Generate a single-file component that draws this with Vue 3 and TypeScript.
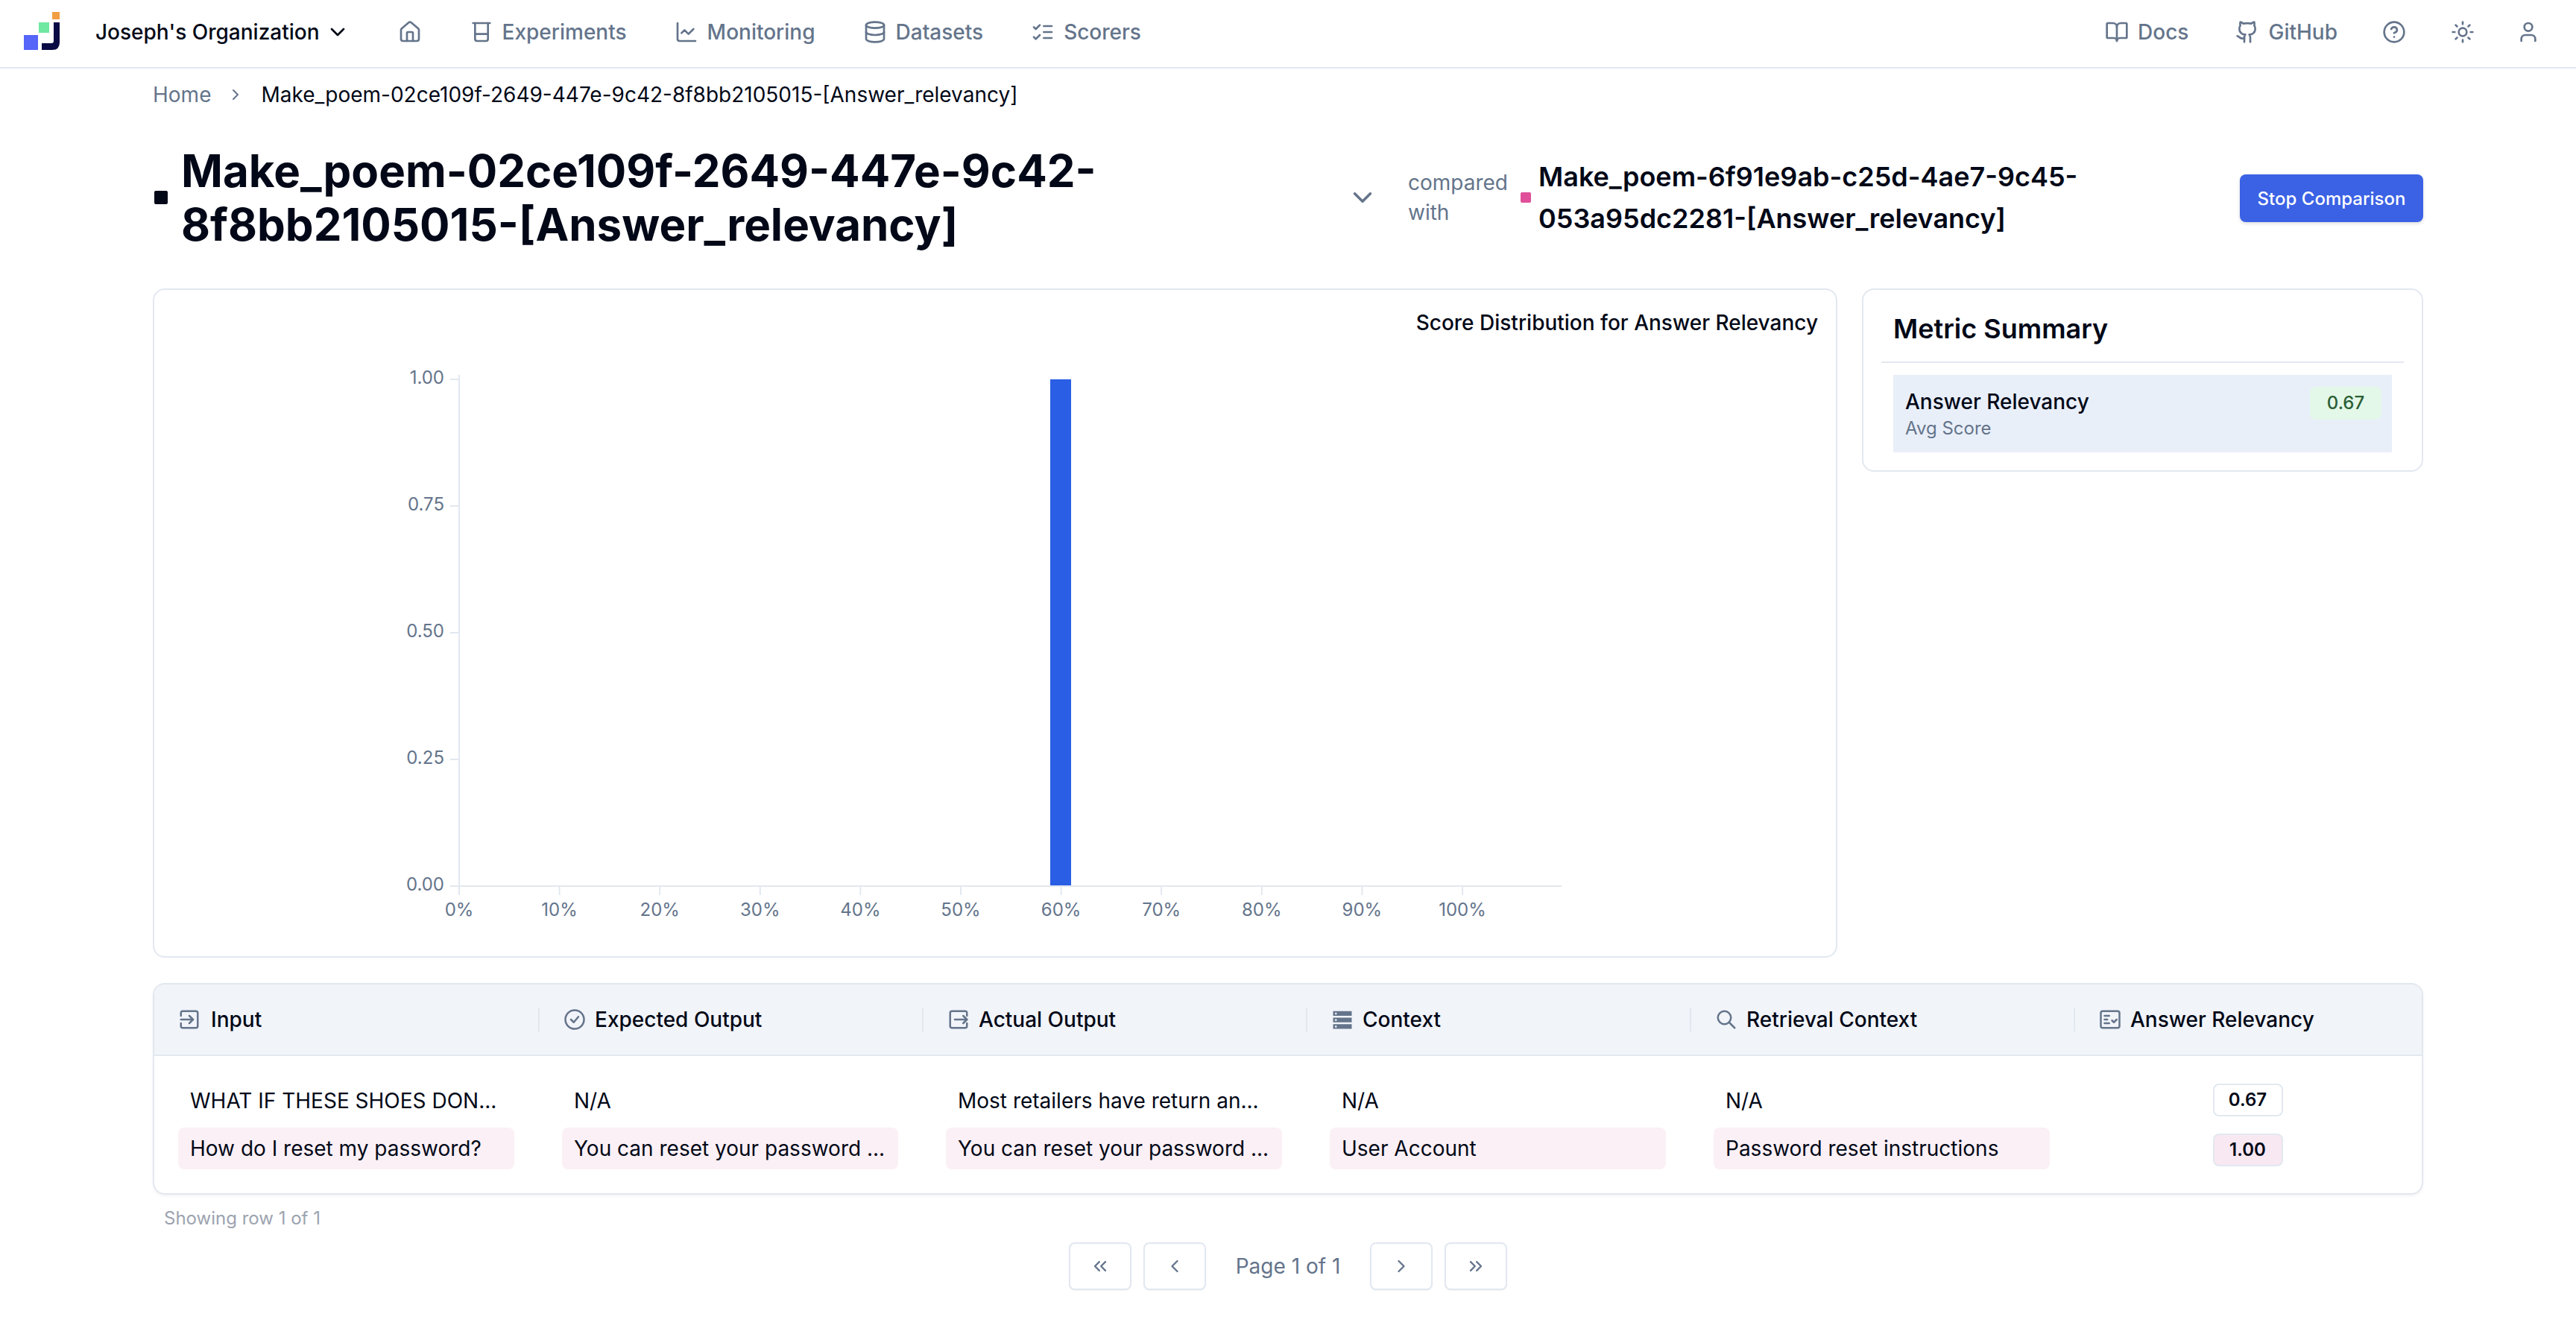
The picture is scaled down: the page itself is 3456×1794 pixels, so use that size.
<template>
  <div class="page">
    <header class="topbar">
      <div class="brand">
        <svg class="logo" width="52" height="54" viewBox="0 0 52 54">
          <rect x="0" y="31" width="19" height="20" fill="#5566f8" />
          <rect x="20" y="14" width="14" height="14" fill="#6fe8a2" />
          <rect x="38" y="0" width="10" height="10" fill="#f29e44" />
          <path d="M40 14h8v27q0 10-10 10H24v-9h13q3 0 3-3z" fill="#0a0a45" />
        </svg>
        <span class="org">Joseph's Organization</span>
        <svg class="org-chevron" width="32" height="32" viewBox="0 0 24 24"><path d="m6 9 6 6 6-6" /></svg>
      </div>
      <nav class="nav-left">
        <a class="nav-item home">
          <svg class="ico" viewBox="0 0 24 24"><path d="M15 21v-8a1 1 0 0 0-1-1h-4a1 1 0 0 0-1 1v8" /><path d="M3 10a2 2 0 0 1 .709-1.528l7-5.999a2 2 0 0 1 2.582 0l7 5.999A2 2 0 0 1 21 10v9a2 2 0 0 1-2 2H5a2 2 0 0 1-2-2z" /></svg>
        </a>
        <a v-for="item in navItems" :key="item.label" class="nav-item">
          <svg class="ico" viewBox="0 0 24 24" v-html="item.icon"></svg>
          <span>{{ item.label }}</span>
        </a>
      </nav>
      <nav class="nav-right">
        <a class="nav-item docs">
          <svg class="ico" viewBox="0 0 24 24"><path d="M12 7v14" /><path d="M3 18a1 1 0 0 1-1-1V4a1 1 0 0 1 1-1h5a4 4 0 0 1 4 4 4 4 0 0 1 4-4h5a1 1 0 0 1 1 1v13a1 1 0 0 1-1 1h-6a3 3 0 0 0-3 3 3 3 0 0 0-3-3z" /></svg>
          <span>Docs</span>
        </a>
        <a class="nav-item">
          <svg class="ico" viewBox="0 0 24 24"><path d="M15 22v-4a4.8 4.8 0 0 0-1-3.5c3 0 6-2 6-5.5.08-1.25-.27-2.48-1-3.5.28-1.15.28-2.35 0-3.5 0 0-1 0-3 1.5-2.64-.5-5.36-.5-8 0C6 2 5 2 5 2c-.3 1.15-.3 2.35 0 3.5A5.403 5.403 0 0 0 4 9c0 3.5 3 5.5 6 5.5-.39.49-.68 1.05-.85 1.65-.17.6-.22 1.23-.15 1.85v4" /><path d="M9 18c-4.51 2-5-2-7-2" /></svg>
          <span>GitHub</span>
        </a>
        <a class="nav-item">
          <svg class="ico" viewBox="0 0 24 24"><circle cx="12" cy="12" r="10" /><path d="M9.09 9a3 3 0 0 1 5.83 1c0 2-3 3-3 3" /><path d="M12 17h.01" /></svg>
        </a>
        <a class="nav-item">
          <svg class="ico" viewBox="0 0 24 24"><circle cx="12" cy="12" r="4" /><path d="M12 2v2M12 20v2M4.93 4.93l1.41 1.41M17.66 17.66l1.41 1.41M2 12h2M20 12h2M6.34 17.66l-1.41 1.41M19.07 4.93l-1.41 1.41" /></svg>
        </a>
        <a class="nav-item user">
          <svg class="ico" viewBox="0 0 24 24"><path d="M19 21v-2a4 4 0 0 0-4-4H9a4 4 0 0 0-4 4v2" /><circle cx="12" cy="7" r="4" /></svg>
        </a>
      </nav>
    </header>

    <main class="content">
      <div class="crumbs">
        <span class="crumb-home">Home</span>
        <svg class="crumb-sep" width="24" height="24" viewBox="0 0 24 24"><path d="m9 18 6-6-6-6" /></svg>
        <span class="crumb-current">{{ runA }}</span>
      </div>

      <div class="title-row">
        <div class="title-main">
          <i class="dot dot-black"></i>
          <h1>{{ runA }}</h1>
        </div>
        <svg class="title-chevron" width="42" height="42" viewBox="0 0 24 24"><path d="m6 9 6 6 6-6" /></svg>
        <div class="compared">compared with</div>
        <i class="dot dot-pink"></i>
        <h2 class="title-other">{{ runB }}</h2>
        <button class="stop-btn">Stop Comparison</button>
      </div>

      <div class="cards">
        <section class="card chart-card">
          <div class="chart-title">Score Distribution for Answer Relevancy</div>
          <svg class="chart" width="2000" height="760" viewBox="0 0 2000 760">
            <g class="axis">
              <line x1="409" y1="0" x2="409" y2="688" />
              <line x1="397" y1="686" x2="1888" y2="686" />
              <line v-for="t in yTicks" :key="t.label" x1="397" :y1="t.y" x2="409" :y2="t.y" />
              <line v-for="t in xTicks" :key="t.label" :x1="t.x" y1="686" :x2="t.x" y2="698" />
            </g>
            <rect class="bar" x="1202" y="6" width="28" height="679" />
            <text v-for="t in yTicks" :key="t.label" class="tick" x="389" :y="t.y + 6" text-anchor="end">{{ t.label }}</text>
            <text v-for="t in xTicks" :key="t.label" class="tick" :x="t.x" y="726" text-anchor="middle">{{ t.label }}</text>
          </svg>
        </section>

        <aside class="card summary-card">
          <h3>Metric Summary</h3>
          <div class="summary-row">
            <div>
              <div class="summary-name">Answer Relevancy</div>
              <div class="summary-sub">Avg Score</div>
            </div>
            <span class="summary-badge">0.67</span>
          </div>
        </aside>
      </div>

      <section class="table">
        <div class="grid thead">
          <div v-for="col in columns" :key="col.label" class="th">
            <svg class="ico th-ico" viewBox="0 0 24 24" v-html="col.icon"></svg>
            <span>{{ col.label }}</span>
          </div>
        </div>
        <div class="grid tbody">
          <div v-for="(text, i) in rowA" :key="'a' + i" class="cell">{{ text }}</div>
          <div class="score-cell"><span class="score">0.67</span></div>
          <div v-for="(text, i) in rowB" :key="'b' + i" class="cell cell-b">{{ text }}</div>
          <div class="score-cell"><span class="score score-b">1.00</span></div>
        </div>
      </section>

      <div class="showing">Showing row 1 of 1</div>

      <div class="pager">
        <button class="page-btn"><svg width="28" height="28" viewBox="0 0 24 24"><path d="m11 17-5-5 5-5M18 17l-5-5 5-5" /></svg></button>
        <button class="page-btn"><svg width="28" height="28" viewBox="0 0 24 24"><path d="m15 18-6-6 6-6" /></svg></button>
        <span class="page-label">Page 1 of 1</span>
        <button class="page-btn"><svg width="28" height="28" viewBox="0 0 24 24"><path d="m9 18 6-6-6-6" /></svg></button>
        <button class="page-btn"><svg width="28" height="28" viewBox="0 0 24 24"><path d="m6 17 5-5-5-5M13 17l5-5-5-5" /></svg></button>
      </div>
    </main>
  </div>
</template>

<script setup lang="ts">
const runA = 'Make_poem-02ce109f-2649-447e-9c42-8f8bb2105015-[Answer_relevancy]'
const runB = 'Make_poem-6f91e9ab-c25d-4ae7-9c45-053a95dc2281-[Answer_relevancy]'

const navItems = [
  {
    label: 'Experiments',
    icon: '<path d="M3.5 3h17" /><path d="M5.5 3v16a2 2 0 0 0 2 2h9a2 2 0 0 0 2-2V3" /><path d="M5.5 14h13" />'
  },
  {
    label: 'Monitoring',
    icon: '<path d="M3 3v16a2 2 0 0 0 2 2h16" /><path d="m19 9-5 5-4-4-3 3" />'
  },
  {
    label: 'Datasets',
    icon: '<ellipse cx="12" cy="5" rx="9" ry="3" /><path d="M3 5v14a9 3 0 0 0 18 0V5" /><path d="M3 12a9 3 0 0 0 18 0" />'
  },
  {
    label: 'Scorers',
    icon: '<path d="m3 17 2 2 4-4" /><path d="m3 7 2 2 4-4" /><path d="M13 6h8M13 12h8M13 18h8" />'
  }
]

const yTicks = [
  { label: '1.00', y: 6 },
  { label: '0.75', y: 176 },
  { label: '0.50', y: 346 },
  { label: '0.25', y: 516 },
  { label: '0.00', y: 686 }
]

const xTicks = Array.from({ length: 11 }, (_, i) => ({
  label: `${i * 10}%`,
  x: 409 + i * 134.6
}))

const columns = [
  { label: 'Input', icon: '<path d="M3 8V5a2 2 0 0 1 2-2h14a2 2 0 0 1 2 2v14a2 2 0 0 1-2 2H5a2 2 0 0 1-2-2v-3" /><path d="m12 16 4-4-4-4" /><path d="M3 12h13" />' },
  { label: 'Expected Output', icon: '<circle cx="12" cy="12" r="10" /><path d="m8 12 3 3 5-6" />' },
  { label: 'Actual Output', icon: '<path d="M21 8V5a2 2 0 0 0-2-2H5a2 2 0 0 0-2 2v14a2 2 0 0 0 2 2h14a2 2 0 0 0 2-2v-3" /><path d="M8 12h13" /><path d="m17 8 4 4-4 4" />' },
  { label: 'Context', icon: '<rect x="2" y="3" width="20" height="5" fill="#64748b" stroke="none" /><rect x="2" y="10" width="20" height="5" fill="#64748b" stroke="none" /><rect x="2" y="17" width="20" height="5" fill="#64748b" stroke="none" /><path d="M5 5.5h.01M5 12.5h.01M5 19.5h.01" stroke="#fff" />' },
  { label: 'Retrieval Context', icon: '<circle cx="10" cy="10" r="7" /><path d="m21 21-6-6" />' },
  { label: 'Answer Relevancy', icon: '<rect x="2" y="3" width="20" height="18" rx="2" /><path d="M6 8h5M6 12h3M6 16h5" /><path d="m14 13 2 2 3-3" />' }
]

const rowA = ['WHAT IF THESE SHOES DON...', 'N/A', 'Most retailers have return an...', 'N/A', 'N/A']
const rowB = [
  'How do I reset my password?',
  'You can reset your password ...',
  'You can reset your password ...',
  'User Account',
  'Password reset instructions'
]
</script>

<style>
html, body {
  margin: 0;
  background: #fff;
}
</style>

<style scoped>
.page {
  width: 3456px;
  min-height: 1794px;
  font-family: Inter, "Liberation Sans", sans-serif;
  color: #020817;
  font-size: 28px;
  overflow: hidden;
}

svg {
  fill: none;
  stroke: currentColor;
  stroke-width: 2;
  stroke-linecap: round;
  stroke-linejoin: round;
}

.topbar {
  height: 92px;
  box-sizing: border-box;
  border-bottom: 2px solid #e2e8f0;
  display: flex;
  align-items: center;
  padding: 0 48px 4px 32px;
}

.brand {
  display: flex;
  align-items: center;
}

.logo, .logo path, .logo rect {
  stroke: none;
}

.org {
  font-weight: 500;
  margin-left: 44px;
}

.org-chevron {
  margin-left: 8px;
}

.nav-left, .nav-right {
  display: flex;
  align-items: center;
}

.nav-left {
  margin-left: 65px;
  gap: 64px;
}

.nav-right {
  margin-left: auto;
  gap: 60px;
}

.nav-item {
  display: flex;
  align-items: center;
  gap: 12px;
  color: #64748b;
  font-weight: 500;
}

.docs {
  margin-right: 3px;
}

.user {
  margin-left: -4px;
}

.ico {
  width: 32px;
  height: 32px;
}

.content {
  width: 3046px;
  margin: 0 auto;
}

.crumbs {
  display: flex;
  align-items: center;
  height: 70px;
}

.crumb-home {
  color: #64748b;
}

.crumb-sep {
  color: #64748b;
  margin: 0 22px 0 21px;
}

.title-row {
  display: flex;
  align-items: center;
  height: 225px;
  box-sizing: border-box;
  padding-bottom: 20px;
}

.title-main {
  width: 1590px;
  display: flex;
  align-items: center;
  gap: 18px;
  flex: none;
}

.dot {
  display: block;
  flex: none;
  border-radius: 2px;
}

.dot-black {
  width: 18px;
  height: 18px;
  background: #020817;
  margin-left: 2px;
}

.dot-pink {
  width: 14px;
  height: 14px;
  background: #e0509a;
  margin-left: 1px;
  margin-right: 10px;
}

h1 {
  margin: 0;
  font-size: 60px;
  line-height: 72px;
  font-weight: 700;
}

.title-chevron {
  color: #64748b;
  margin-left: 12px;
  flex: none;
}

.compared {
  width: 150px;
  margin-left: 40px;
  color: #64748b;
  line-height: 40px;
  flex: none;
}

.title-other {
  margin: 0;
  font-size: 36px;
  line-height: 56px;
  font-weight: 600;
  width: 880px;
  flex: none;
}

.stop-btn {
  margin-left: auto;
  margin-top: 3px;
  width: 246px;
  height: 64px;
  border: none;
  border-radius: 8px;
  background: #3b62e5;
  color: #fff;
  font-family: inherit;
  font-size: 24px;
  font-weight: 500;
  box-shadow: 0 2px 4px rgba(15, 23, 42, 0.15);
}

.cards {
  display: flex;
  align-items: flex-start;
  gap: 33px;
}

.card {
  box-sizing: border-box;
  border: 2px solid #e2e8f0;
  border-radius: 16px;
  background: #fff;
}

.chart-card {
  width: 2260px;
  height: 898px;
  padding: 24px 24px 0 0;
  flex: none;
}

.chart-title {
  text-align: right;
  font-weight: 500;
  line-height: 40px;
}

.chart {
  display: block;
  margin-top: 50px;
  overflow: visible;
  stroke-linecap: butt;
}

.bar {
  fill: #2a5ee4;
  stroke: none;
}

.axis line {
  stroke: #e2e8f0;
  stroke-width: 2;
}

.tick {
  font-size: 24px;
  fill: #64748b;
  stroke: none;
}

.summary-card {
  flex: 1;
  height: 246px;
  padding: 0 24px;
}

.summary-card h3 {
  margin: 0;
  height: 96px;
  line-height: 104px;
  padding-left: 16px;
  font-size: 36px;
  font-weight: 600;
  border-bottom: 2px solid #e2e8f0;
}

.summary-row {
  display: flex;
  justify-content: space-between;
  align-items: flex-start;
  background: #e9eff9;
  margin: 16px 16px 0;
  height: 104px;
  box-sizing: border-box;
  padding: 16px 14px 0 16px;
}

.summary-name {
  font-weight: 500;
  line-height: 40px;
}

.summary-sub {
  font-size: 24px;
  line-height: 32px;
  color: #64748b;
}

.summary-badge {
  background: #e3f8e8;
  color: #2a5e35;
  font-size: 24px;
  font-weight: 500;
  width: 96px;
  height: 44px;
  line-height: 44px;
  text-align: center;
  border-radius: 8px;
}

.table {
  box-sizing: border-box;
  margin-top: 34px;
  height: 284px;
  border: 2px solid #e2e8f0;
  border-radius: 16px;
  overflow: hidden;
  box-shadow: 0 2px 4px rgba(15, 23, 42, 0.05);
}

.grid {
  display: grid;
  grid-template-columns: repeat(5, 515px) 1fr;
}

.thead {
  height: 96px;
  box-sizing: border-box;
  background: #f1f4f9;
  border-bottom: 2px solid #e2e8f0;
  align-items: center;
}

.th {
  display: flex;
  align-items: center;
  gap: 12px;
  height: 32px;
  padding-left: 32px;
  font-weight: 500;
  border-left: 2px solid #e2e8f0;
}

.th:first-child {
  border-left: none;
  gap: 14px;
}

.th-ico {
  color: #64748b;
  width: 30px;
  height: 30px;
}

.tbody {
  padding-top: 32px;
}

.cell {
  margin-left: 32px;
  margin-right: 32px;
  padding-left: 16px;
  height: 64px;
  line-height: 56px;
  white-space: nowrap;
  overflow: hidden;
}

.cell-b {
  height: 56px;
  background: #fbf0f6;
  border-radius: 8px;
}

.score-cell {
  height: 64px;
  display: flex;
  justify-content: center;
  align-items: flex-start;
}

.score {
  box-sizing: border-box;
  width: 94px;
  height: 44px;
  line-height: 40px;
  margin-top: 5px;
  text-align: center;
  font-size: 24px;
  font-weight: 600;
  border: 2px solid #e2e8f0;
  border-radius: 8px;
  background: #fff;
}

.score-b {
  background: #f8e8f2;
  margin-top: 8px;
}

.showing {
  margin-top: 16px;
  padding-left: 15px;
  font-size: 24px;
  line-height: 32px;
  color: #9ca3af;
}

.pager {
  display: flex;
  justify-content: center;
  align-items: center;
  gap: 16px;
  margin-top: 16px;
}

.page-btn {
  box-sizing: border-box;
  width: 84px;
  height: 64px;
  display: flex;
  align-items: center;
  justify-content: center;
  background: #fff;
  border: 2px solid #e2e8f0;
  border-radius: 8px;
  color: #64748b;
  padding: 0;
  box-shadow: 0 1px 2px rgba(15, 23, 42, 0.05);
}

.page-label {
  color: #64748b;
  margin: 0 24px;
}
</style>
